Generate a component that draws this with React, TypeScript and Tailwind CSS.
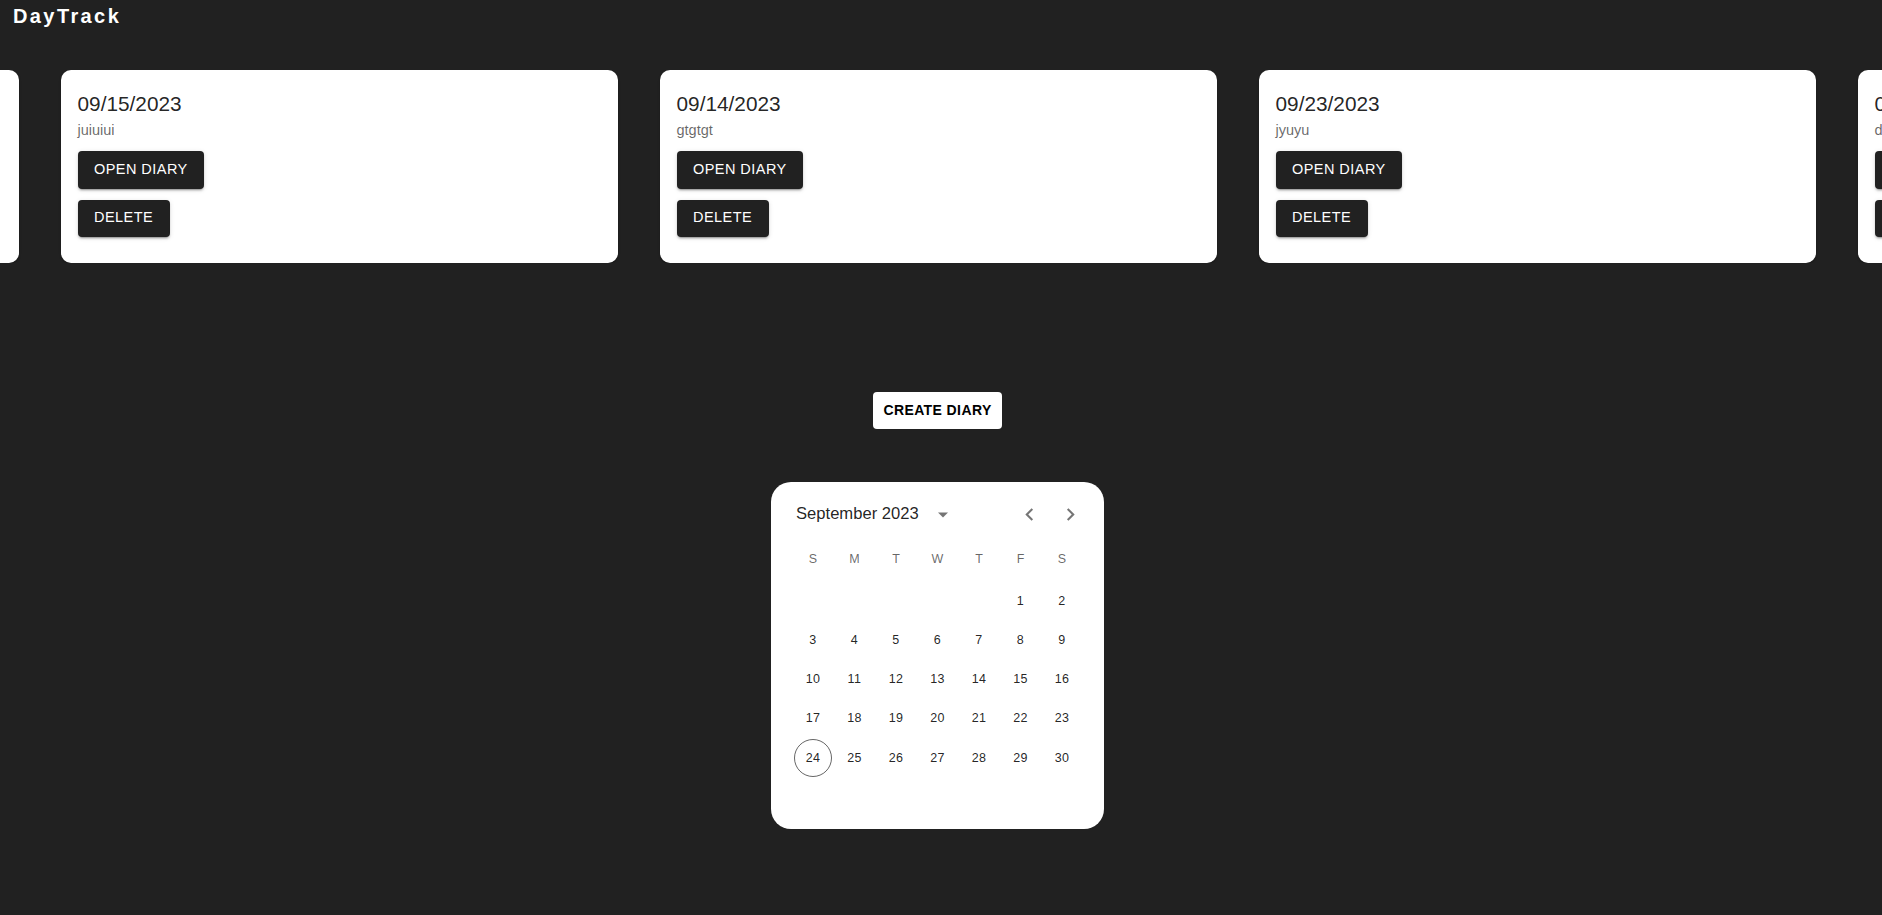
import React from "react";

const cards = [
  { date: "09/10/2023", text: "hello" },
  { date: "09/15/2023", text: "juiuiui" },
  { date: "09/14/2023", text: "gtgtgt" },
  { date: "09/23/2023", text: "jyuyu" },
  { date: "09/20/2023", text: "dfdfdf" },
];

const weeks: (number | null)[][] = [
  [null, null, null, null, null, 1, 2],
  [3, 4, 5, 6, 7, 8, 9],
  [10, 11, 12, 13, 14, 15, 16],
  [17, 18, 19, 20, 21, 22, 23],
  [24, 25, 26, 27, 28, 29, 30],
];

const dow = ["S", "M", "T", "W", "T", "F", "S"];

function DiaryCard({ date, text }: { date: string; text: string }) {
  return (
    <div className="w-[557px] shrink-0 rounded-[10px] bg-white px-[16.5px] pt-[16.5px] pb-[25.5px] shadow-[0_2px_1px_-1px_rgba(0,0,0,0.2),0_1px_1px_0_rgba(0,0,0,0.14),0_1px_3px_0_rgba(0,0,0,0.12)]">
      <div className="text-[20.8px] leading-[33px] text-[rgba(0,0,0,0.87)] whitespace-nowrap">{date}</div>
      <div className="text-[14.5px] leading-[21px] text-[rgba(0,0,0,0.6)] whitespace-nowrap">{text}</div>
      <div className="mt-[10.5px] flex flex-col items-start gap-[11px]">
        <button className="h-[37.5px] rounded-[4px] bg-[#212121] px-[16.5px] text-[14.5px] uppercase tracking-[0.45px] text-white shadow-[0_3px_1px_-2px_rgba(0,0,0,0.2),0_2px_2px_0_rgba(0,0,0,0.14),0_1px_5px_0_rgba(0,0,0,0.12)] whitespace-nowrap">
          Open Diary
        </button>
        <button className="h-[37.5px] rounded-[4px] bg-[#212121] px-[16.5px] text-[14.5px] uppercase tracking-[0.45px] text-white shadow-[0_3px_1px_-2px_rgba(0,0,0,0.2),0_2px_2px_0_rgba(0,0,0,0.14),0_1px_5px_0_rgba(0,0,0,0.12)] whitespace-nowrap">
          Delete
        </button>
      </div>
    </div>
  );
}

function Calendar() {
  return (
    <div className="h-[347px] w-[333px] rounded-[20px] bg-white pt-[17.6px]">
      <div className="mb-[8.3px] flex h-[31.2px] items-center pl-[25px] pr-[19px]">
        <span className="text-[16.6px] text-[rgba(0,0,0,0.87)] whitespace-nowrap">September 2023</span>
        <span className="ml-[12.6px] flex h-[25px] w-[24px] items-center justify-center">
          <svg viewBox="0 0 24 24" width="25" height="25" fill="rgba(0,0,0,0.54)">
            <path d="M7 10l5 5 5-5z" />
          </svg>
        </span>
        <div className="flex-1" />
        <span className="flex h-[29px] w-[29px] items-center justify-center">
          <svg viewBox="0 0 24 24" width="25" height="25" fill="rgba(0,0,0,0.54)">
            <path d="M15.41 16.59L10.83 12l4.58-4.59L14 6l-6 6 6 6 1.41-1.41z" />
          </svg>
        </span>
        <span className="ml-[12.5px] flex h-[29px] w-[29px] items-center justify-center">
          <svg viewBox="0 0 24 24" width="25" height="25" fill="rgba(0,0,0,0.54)">
            <path d="M8.59 16.59L13.17 12 8.59 7.41 10 6l6 6-6 6-1.41-1.41z" />
          </svg>
        </span>
      </div>
      <div className="mx-auto w-[290.5px]">
        <div className="grid h-[41.6px] grid-cols-7 items-center">
          {dow.map((d, i) => (
            <div key={i} className="flex justify-center text-[12.5px] text-[rgba(0,0,0,0.6)]">
              {d}
            </div>
          ))}
        </div>
        <div className="flex flex-col gap-[1.8px] pt-[2px]">
          {weeks.map((w, wi) => (
            <div key={wi} className="grid h-[37.5px] grid-cols-7">
              {w.map((d, di) => (
                <div key={di} className="flex items-center justify-center">
                  {d !== null && (
                    <div
                      className={
                        "flex h-[37.5px] w-[37.5px] items-center justify-center rounded-full text-[12.5px] tracking-[0.4px] text-[rgba(0,0,0,0.87)] " +
                        (d === 24 ? "border border-[rgba(0,0,0,0.6)]" : "")
                      }
                    >
                      {d}
                    </div>
                  )}
                </div>
              ))}
            </div>
          ))}
        </div>
      </div>
    </div>
  );
}

export default function App() {
  return (
    <div className="min-h-screen w-full overflow-hidden bg-[#212121] font-['Liberation_Sans',Arial,sans-serif]">
      <div className="h-[28px] pl-[13px] pt-[5px]">
        <div className="text-[20px] font-bold leading-[23px] tracking-[2.4px] text-white">DayTrack</div>
      </div>
      <div className="mt-[42px] w-full overflow-hidden">
        <div className="ml-[-538px] flex gap-[42px]">
          {cards.map((c, i) => (
            <DiaryCard key={i} date={c.date} text={c.text} />
          ))}
        </div>
      </div>
      <div className="flex flex-col items-center pr-[7px]">
        <button className="mt-[129px] flex h-[37px] w-[129px] items-center justify-center rounded-[4px] bg-white text-[14px] font-bold uppercase tracking-[0.4px] text-black whitespace-nowrap">
          Create Diary
        </button>
        <div className="mt-[53px]">
          <Calendar />
        </div>
      </div>
    </div>
  );
}
